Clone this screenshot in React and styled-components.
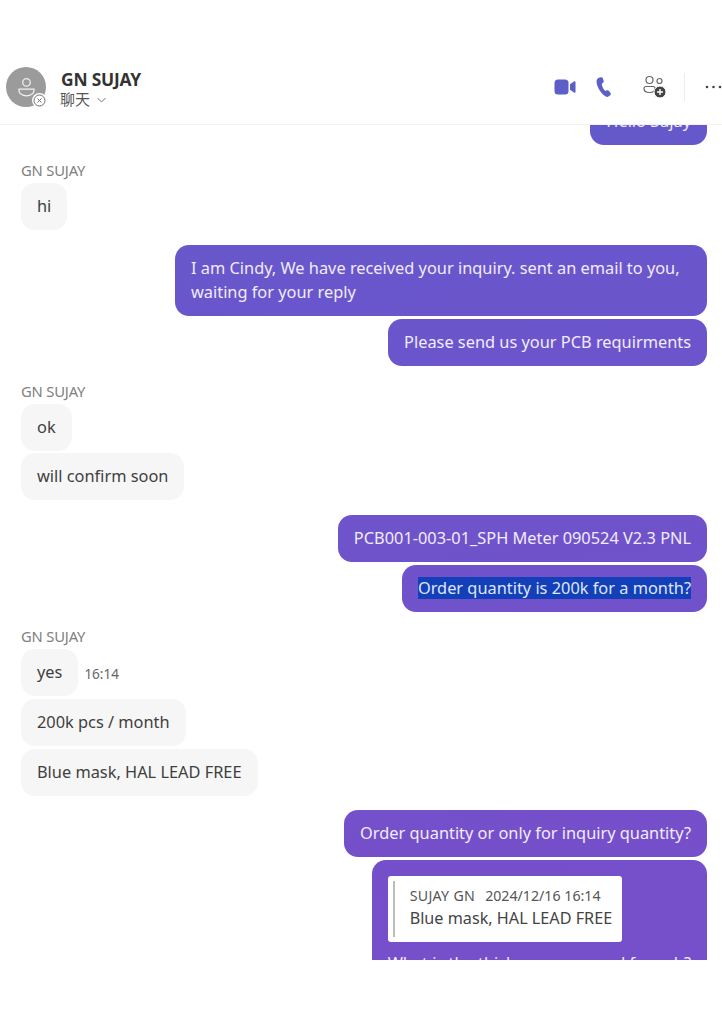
import React from "react";
import styled, { createGlobalStyle } from "styled-components";

const Global = createGlobalStyle`
  html, body { margin: 0; padding: 0; background: #fff; }
  body { font-family: "Noto Sans", "Noto Sans CJK SC", sans-serif; color: #3a3a3a; }
`;

const Page = styled.div`
  width: 722px;
  height: 1024px;
  background: #fff;
  overflow: hidden;
`;

const Header = styled.header`
  height: 63px;
  margin-top: 62px;
  box-sizing: border-box;
  padding: 5px 0 0 6px;
  display: flex;
  align-items: flex-start;
  border-bottom: 1px solid #f2f2f2;
`;

const Avatar = styled.div`
  position: relative;
  width: 40px;
  height: 40px;
  border-radius: 50%;
  background: #9b9b9b;
  display: flex;
  align-items: center;
  justify-content: center;
  flex: none;
`;

const Badge = styled.div`
  position: absolute;
  right: -1px;
  bottom: -1px;
  width: 15px;
  height: 15px;
  border-radius: 50%;
  background: #fff;
  display: flex;
  align-items: center;
  justify-content: center;
`;

const Who = styled.div`
  margin-left: 14px;
  display: flex;
  flex-direction: column;
`;

const Name = styled.div`
  font-size: 17.4px;
  line-height: 20px;
  margin-top: 2px;
  margin-left: 1px;
  font-weight: 700;
  letter-spacing: -0.2px;
  color: #333;
`;

const Sub = styled.div`
  display: flex;
  align-items: center;
  gap: 7px;
  font-size: 15px;
  line-height: 21px;
  color: #555;
`;

const Actions = styled.div`
  margin-left: auto;
  display: flex;
  align-items: center;
  height: 40px;
`;

const Divider = styled.div`
  width: 1px;
  height: 28px;
  background: #ececec;
  margin: 0 20px 0 17px;
`;

const Thread = styled.main`
  height: 835px;
  overflow: hidden;
  padding: 0 15px 0 21px;
`;

const List = styled.div`
  margin-top: -27px;
  display: flex;
  flex-direction: column;
`;

const Sender = styled.div`
  font-size: 14.8px;
  line-height: 18px;
  color: #808080;
  letter-spacing: -0.2px;
  margin-top: ${(p) => p.$top || 0}px;
  margin-bottom: 4px;
`;

const Row = styled.div`
  display: flex;
  align-items: center;
  gap: 6px;
  margin-top: ${(p) => p.$top || 0}px;
`;

const Incoming = styled.div`
  background: #f6f6f6;
  border-radius: 14px;
  padding: 11px 16px 12px;
  font-size: 16.35px;
  line-height: 24px;
  color: #3f3f3f;
  width: fit-content;
  margin-top: ${(p) => p.$top || 0}px;
`;

const Time = styled.span`
  font-size: 13.5px;
  color: #666;
  padding-top: 3px;
`;

const Outgoing = styled.div`
  align-self: flex-end;
  box-sizing: border-box;
  background: linear-gradient(172deg, #5b5fc7 0%, #6a56cc 30%, #764fca 85%) fixed;
  color: #f1ecfb;
  border-radius: 14px;
  padding: 11px 16px 12px;
  font-size: 16.35px;
  line-height: 24px;
  width: fit-content;
  max-width: 532px;
  margin-top: ${(p) => p.$top || 0}px;
`;

const Selected = styled.span`
  background: #1340b8;
  color: #dfe6fa;
`;

const Quote = styled.div`
  background: #fff;
  border-radius: 3px;
  color: #444;
  padding: 9px 10px 12px 22px;
  margin: 5px 0 9px;
  width: fit-content;
  position: relative;
  &::before {
    content: "";
    position: absolute;
    left: 5px;
    top: 5px;
    bottom: 5px;
    width: 2px;
    background: #bdbdbd;
  }
`;

const QuoteHead = styled.div`
  font-size: 14.2px;
  line-height: 21px;
  color: #555;
  display: flex;
  gap: 10px;
`;

const QuoteName = styled.span`
  letter-spacing: 0.3px;
`;

const QuoteBody = styled.div`
  font-size: 16.2px;
  line-height: 24px;
`;

const VideoIcon = () => (
  <svg width="22" height="16" viewBox="0 0 22 16" style={{ marginRight: 20 }}>
    <rect x="0.5" y="0.5" width="14" height="15" rx="3.5" fill="#5b5fc7" />
    <path d="M16 5.2 20 2.4c.7-.5 1.5 0 1.5.8v9.6c0 .8-.8 1.3-1.5.8l-4-2.8z" fill="#5b5fc7" />
  </svg>
);

const PhoneIcon = () => (
  <svg width="16" height="21" viewBox="0 0 16 21" style={{ marginRight: 31 }}>
    <path
      d="M3.6.6 5 .3c.8-.2 1.5.3 1.8 1l.9 2.5c.2.7 0 1.4-.5 1.8L6 6.8c-.2.2-.3.5-.2.8.4 2.100 1.500 4.400 3 6 .2.2.500.300.800.200l1.600-.500c.7-.2 1.400 0 1.800.600l1.500 2.100c.5.700.4 1.600-.2 2.100l-1 1c-.8.8-2 1-3 .6C6 18 .8 10.500.5 4.800.4 2.800 1.800 1 3.600.6z"
      fill="#5b5fc7"
    />
  </svg>
);

const PeopleAddIcon = () => (
  <svg width="24" height="24" viewBox="0 0 24 24" fill="none" stroke="#666" strokeWidth="1.2">
    <circle cx="6.500" cy="5" r="3.500" />
    <circle cx="16.500" cy="6" r="2.500" />
    <path d="M1 13.500c0-1.200.8-2 2-2h7c1.200 0 2 .8 2 2 0 2.500-2.500 4-5.500 4S1 16 1 13.500z" />
    <circle cx="17" cy="17" r="6" fill="#444" stroke="#fff" strokeWidth="1" />
    <path d="M17 14v6M14 17h6" stroke="#fff" strokeWidth="1.400" />
  </svg>
);

const MoreIcon = () => (
  <svg width="17" height="4" viewBox="0 0 17 4">
    <circle cx="2" cy="2" r="1.300" fill="#444" />
    <circle cx="8.500" cy="2" r="1.300" fill="#444" />
    <circle cx="15" cy="2" r="1.300" fill="#444" />
  </svg>
);

export default function App() {
  return (
    <Page>
      <Global />
      <Header>
        <Avatar>
          <svg width="19" height="20" viewBox="0 0 22 24" fill="none" stroke="#f1f1f1" strokeWidth="1.500">
            <circle cx="11" cy="6.500" r="4.500" />
            <path d="M2 14.500h18v2c0 3.500-4 6-9 6s-9-2.500-9-6z" />
          </svg>
          <Badge>
            <svg width="13" height="13" viewBox="0 0 13 13" fill="none" stroke="#6e6e6e" strokeWidth="1">
              <circle cx="6.500" cy="6.500" r="5.500" />
              <path d="M4.500 4.500l4 4M8.500 4.500l-4 4" />
            </svg>
          </Badge>
        </Avatar>
        <Who>
          <Name>GN SUJAY</Name>
          <Sub>
            聊天
            <svg width="9" height="6" viewBox="0 0 9 6" fill="none" stroke="#666" strokeWidth="0.900">
              <path d="M.5 1 4.500 5l4-4" />
            </svg>
          </Sub>
        </Who>
        <Actions>
          <VideoIcon />
          <PhoneIcon />
          <PeopleAddIcon />
          <Divider />
          <MoreIcon />
        </Actions>
      </Header>
      <Thread>
        <List>
          <Outgoing>Hello Sujay</Outgoing>
          <Sender $top={16}>GN SUJAY</Sender>
          <Incoming>hi</Incoming>
          <Outgoing $top={15}>
            I am Cindy, We have received your inquiry. sent an email to you, waiting for your reply
          </Outgoing>
          <Outgoing $top={3}>Please send us your PCB requirments</Outgoing>
          <Sender $top={16}>GN SUJAY</Sender>
          <Incoming>ok</Incoming>
          <Incoming $top={2}>will confirm soon</Incoming>
          <Outgoing $top={15}>PCB001-003-01_SPH Meter 090524 V2.3 PNL</Outgoing>
          <Outgoing $top={3}>
            <Selected>Order quantity is 200k for a month?</Selected>
          </Outgoing>
          <Sender $top={15}>GN SUJAY</Sender>
          <Row>
            <Incoming>yes</Incoming>
            <Time>16:14</Time>
          </Row>
          <Incoming $top={3}>200k pcs / month</Incoming>
          <Incoming $top={3}>Blue mask, HAL LEAD FREE</Incoming>
          <Outgoing $top={14}>Order quantity or only for inquiry quantity?</Outgoing>
          <Outgoing $top={3}>
            <Quote>
              <QuoteHead>
                <QuoteName>SUJAY GN</QuoteName>
                <span>2024/12/16 16:14</span>
              </QuoteHead>
              <QuoteBody>Blue mask, HAL LEAD FREE</QuoteBody>
            </Quote>
            What is the thickness you need for pcb?
          </Outgoing>
        </List>
      </Thread>
    </Page>
  );
}
